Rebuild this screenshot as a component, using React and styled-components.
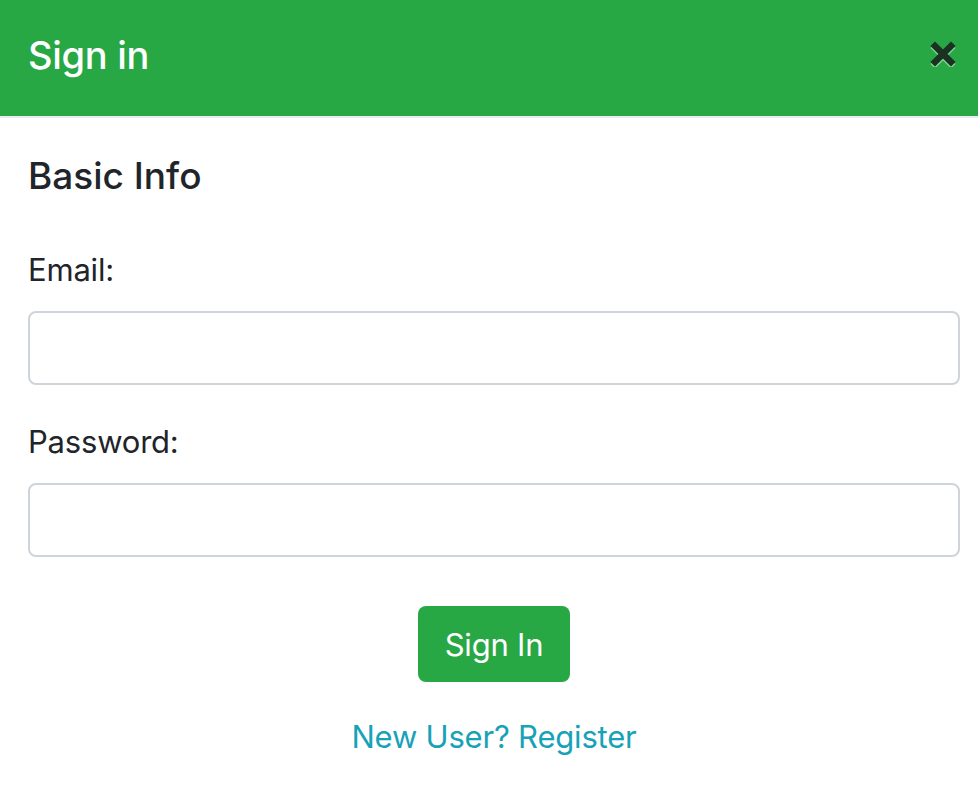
import React from "react";
import styled, { createGlobalStyle } from "styled-components";

const Global = createGlobalStyle`
  html, body { margin: 0; padding: 0; background: #fff; }
  body { font-family: Inter, "Liberation Sans", Arial, sans-serif; color: #212529; }
  * { box-sizing: border-box; }
`;

const Modal = styled.div`
  width: 978px;
  min-height: 802px;
  background: #fff;
`;

const Header = styled.header`
  height: 118px;
  background: #28a745;
  border-bottom: 2px solid #e9ecef;
  display: flex;
  align-items: flex-start;
  justify-content: space-between;
  padding: 25px 22px 0 28px;
`;

const Title = styled.h5`
  margin: 0;
  font-size: 38px;
  font-weight: 500;
  letter-spacing: -0.3px;
  line-height: 60px;
  color: #fff;
`;

const Close = styled.button`
  border: 0;
  background: transparent;
  padding: 0;
  margin-top: 16px;
  width: 26px;
  height: 26px;
  cursor: pointer;
  display: flex;
  align-items: center;
  justify-content: center;
`;

const Body = styled.div`
  padding: 36px 18px 40px 28px;
  display: flex;
  flex-direction: column;
`;

const Heading = styled.h4`
  margin: 0 0 49px;
  font-size: 37px;
  font-weight: 500;
  line-height: 43px;
  color: #212529;
`;

const Field = styled.div`
  display: flex;
  flex-direction: column;
  margin-bottom: ${(p) => p.$gap}px;
`;

const Label = styled.label`
  font-size: 31px;
  letter-spacing: -0.2px;
  line-height: 48px;
  margin-bottom: 17px;
  color: #212529;
`;

const Input = styled.input`
  width: 932px;
  height: 74px;
  border: 2px solid #ced4da;
  border-radius: 8px;
  background: #fff;
  font: inherit;
  font-size: 31px;
  padding: 0 20px;
  outline: none;
`;

const Actions = styled.div`
  display: flex;
  flex-direction: column;
  align-items: center;
  width: 932px;
`;

const Button = styled.button`
  width: 152px;
  height: 76px;
  border: 0;
  border-radius: 8px;
  background: #28a745;
  color: #fff;
  font-family: inherit;
  font-size: 31px;
  letter-spacing: -0.2px;
  font-weight: 400;
  margin-bottom: 31px;
  cursor: pointer;
`;

const RegisterLink = styled.a`
  font-size: 31px;
  letter-spacing: -0.2px;
  line-height: 48px;
  color: #17a2b8;
  text-decoration: none;
`;

export default function App() {
  return (
    <Modal>
      <Global />
      <Header>
        <Title>Sign in</Title>
        <Close aria-label="Close">
          <svg width="26" height="26" viewBox="0 0 26 26">
            <g strokeWidth="6.5" strokeLinecap="square">
              <path d="M5 6 L21 22 M21 6 L5 22" stroke="#7fd393" transform="translate(0 1)" />
              <path d="M5 5 L21 21 M21 5 L5 21" stroke="#1b3222" />
            </g>
          </svg>
        </Close>
      </Header>
      <Body>
        <Heading>Basic Info</Heading>
        <Field $gap={33}>
          <Label htmlFor="email">Email:</Label>
          <Input id="email" type="email" />
        </Field>
        <Field $gap={49}>
          <Label htmlFor="password">Password:</Label>
          <Input id="password" type="password" />
        </Field>
        <Actions>
          <Button>Sign In</Button>
          <RegisterLink href="#">New User? Register</RegisterLink>
        </Actions>
      </Body>
    </Modal>
  );
}
